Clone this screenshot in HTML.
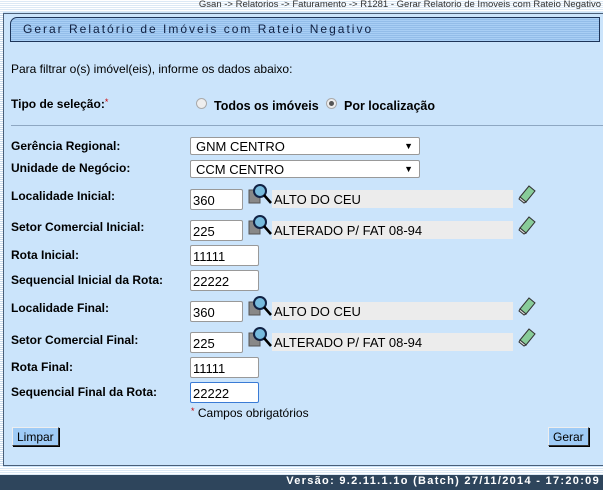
<!DOCTYPE html>
<html><head><meta charset="utf-8"><style>
*{box-sizing:border-box}
body{margin:0;width:603px;height:490px;overflow:hidden;background:#cbe4fb;font-family:"Liberation Sans",Arial,sans-serif;font-size:12px;color:#000;position:relative}
.a{position:absolute;white-space:nowrap}
.stripes{position:absolute;left:0;top:0;width:603px;height:12px;background:repeating-linear-gradient(#fff 0 1px,#dce9f5 1px 2px)}
.lstr{position:absolute;left:0;top:12px;width:3px;height:455px;background:repeating-linear-gradient(#fff 0 1px,#c9dcef 1px 2px)}
.panel{position:absolute;left:3px;top:13px;width:605px;height:453px;border:1px solid #4a5f78;border-right:none;background:#cbe4fb}
.title{position:absolute;left:10px;top:17px;width:590px;height:25px;border:1px solid #1e3559;border-radius:7px 0 0 0;background:repeating-linear-gradient(#a9cff5 0 1px,#93bde9 1px 2px);font-size:12px;letter-spacing:2px;color:#0f1f40;padding:4px 0 0 12px}
.lb{font-weight:bold;font-size:12px}
.in{position:absolute;height:21px;border:1px solid #999;background:#fff;font-size:13px;padding:3px 0 0 2px;border-radius:2px}
.sel{position:absolute;left:190px;width:230px;height:18px;border:1px solid #999;background:#fff;font-size:13px;padding:1px 0 0 5px;border-radius:2px}
.sel:after{content:"▼";position:absolute;right:6px;top:3px;font-size:9px}
.desc{position:absolute;left:272px;width:241px;height:18px;background:#ececec;font-size:13px;padding:2px 0 0 2px}
.btn{position:absolute;height:19px;background:#9fcbf6;border:1px solid #333;border-top-color:#eee;border-left-color:#eee;font-size:12px;padding:2px 4px;box-shadow:1px 1px 0 #000}
.foot{position:absolute;left:0;top:475px;width:603px;height:15px;background:#2e455c;color:#fff;font-weight:bold;font-size:11px;letter-spacing:1.3px;text-align:right;padding:0 3px 0 0}
</style></head><body>
<div class="stripes"></div>
<div class="a" style="right:2px;top:-1px;font-size:9.5px;color:#333">Gsan -&gt; Relatorios -&gt; Faturamento -&gt; R1281 - Gerar Relatorio de Imoveis com Rateio Negativo</div>
<div class="lstr"></div>
<div class="panel"></div>
<div class="title">Gerar Relatório de Imóveis com Rateio Negativo</div>
<div class="a" style="left:11px;top:62px">Para filtrar o(s) imóvel(eis), informe os dados abaixo:</div>
<div class="a lb" style="left:11px;top:97px">Tipo de seleção:<span style="color:#c00;font-weight:normal;font-size:9px;vertical-align:top">*</span></div>
<div class="a" style="left:196px;top:98px;width:11px;height:11px;border-radius:50%;border:1px solid #aaa;background:#eee"></div>
<div class="a lb" style="left:214px;top:99px;font-size:12.5px">Todos os imóveis</div>
<div class="a" style="left:326px;top:98px;width:11px;height:11px;border-radius:50%;border:1px solid #aaa;background:#eee"><div style="width:5px;height:5px;background:#555;border-radius:50%;margin:2px"></div></div>
<div class="a lb" style="left:344px;top:99px;font-size:12.5px">Por localização</div>
<div class="a" style="left:11px;top:125px;width:592px;height:1px;background:#8ea7c2"></div>

<div class="a lb" style="left:11px;top:139px">Gerência Regional:</div>
<div class="sel" style="top:137px">GNM CENTRO</div>
<div class="a lb" style="left:11px;top:161px">Unidade de Negócio:</div>
<div class="sel" style="top:160px">CCM CENTRO</div>

<div class="a lb" style="left:11px;top:189px">Localidade Inicial:</div>
<div class="in" style="left:190px;top:189px;width:53px">360</div>
<svg class="a" style="left:248px;top:184px" width="24" height="24"><rect x="1" y="6" width="11" height="13" fill="#888" stroke="#555"/><circle cx="12" cy="7" r="6" fill="#7bd" stroke="#124" stroke-width="2"/><line x1="16" y1="11" x2="23" y2="19" stroke="#000" stroke-width="2.5"/></svg>
<div class="desc" style="top:190px">ALTO DO CEU</div>
<svg class="a" style="left:517px;top:184px" width="20" height="20"><path d="M3 13 L12 2 L18 7 L9 18 Z" fill="#8c9" stroke="#333"/><path d="M3 13 L9 18 L7 19 L2 15Z" fill="#ddd" stroke="#333"/></svg>

<div class="a lb" style="left:11px;top:220px">Setor Comercial Inicial:</div>
<div class="in" style="left:190px;top:220px;width:53px">225</div>
<svg class="a" style="left:248px;top:215px" width="24" height="24"><rect x="1" y="6" width="11" height="13" fill="#888" stroke="#555"/><circle cx="12" cy="7" r="6" fill="#7bd" stroke="#124" stroke-width="2"/><line x1="16" y1="11" x2="23" y2="19" stroke="#000" stroke-width="2.5"/></svg>
<div class="desc" style="top:221px">ALTERADO P/ FAT 08-94</div>
<svg class="a" style="left:517px;top:215px" width="20" height="20"><path d="M3 13 L12 2 L18 7 L9 18 Z" fill="#8c9" stroke="#333"/><path d="M3 13 L9 18 L7 19 L2 15Z" fill="#ddd" stroke="#333"/></svg>

<div class="a lb" style="left:11px;top:248px">Rota Inicial:</div>
<div class="in" style="left:190px;top:245px;width:69px">11111</div>
<div class="a lb" style="left:11px;top:273px">Sequencial Inicial da Rota:</div>
<div class="in" style="left:190px;top:270px;width:69px">22222</div>

<div class="a lb" style="left:11px;top:301px">Localidade Final:</div>
<div class="in" style="left:190px;top:301px;width:53px">360</div>
<svg class="a" style="left:248px;top:296px" width="24" height="24"><rect x="1" y="6" width="11" height="13" fill="#888" stroke="#555"/><circle cx="12" cy="7" r="6" fill="#7bd" stroke="#124" stroke-width="2"/><line x1="16" y1="11" x2="23" y2="19" stroke="#000" stroke-width="2.5"/></svg>
<div class="desc" style="top:302px">ALTO DO CEU</div>
<svg class="a" style="left:517px;top:296px" width="20" height="20"><path d="M3 13 L12 2 L18 7 L9 18 Z" fill="#8c9" stroke="#333"/><path d="M3 13 L9 18 L7 19 L2 15Z" fill="#ddd" stroke="#333"/></svg>

<div class="a lb" style="left:11px;top:333px">Setor Comercial Final:</div>
<div class="in" style="left:190px;top:332px;width:53px">225</div>
<svg class="a" style="left:248px;top:327px" width="24" height="24"><rect x="1" y="6" width="11" height="13" fill="#888" stroke="#555"/><circle cx="12" cy="7" r="6" fill="#7bd" stroke="#124" stroke-width="2"/><line x1="16" y1="11" x2="23" y2="19" stroke="#000" stroke-width="2.5"/></svg>
<div class="desc" style="top:333px">ALTERADO P/ FAT 08-94</div>
<svg class="a" style="left:517px;top:327px" width="20" height="20"><path d="M3 13 L12 2 L18 7 L9 18 Z" fill="#8c9" stroke="#333"/><path d="M3 13 L9 18 L7 19 L2 15Z" fill="#ddd" stroke="#333"/></svg>

<div class="a lb" style="left:11px;top:360px">Rota Final:</div>
<div class="in" style="left:190px;top:357px;width:69px">11111</div>
<div class="a lb" style="left:11px;top:385px">Sequencial Final da Rota:</div>
<div class="in" style="left:190px;top:382px;width:69px;border-color:#3a7bd5">22222</div>
<div class="a" style="left:191px;top:406px"><span style="color:#c00;font-size:9px;vertical-align:top">*</span> Campos obrigatórios</div>

<div class="btn" style="left:12px;top:427px">Limpar</div>
<div class="btn" style="left:548px;top:427px">Gerar</div>
<div class="a" style="left:0;top:467px;width:603px;height:8px;background:repeating-linear-gradient(#fff 0 1px,#dce9f5 1px 2px)"></div>
<div class="foot">Versão: 9.2.11.1.1o (Batch) 27/11/2014 - 17:20:09</div>
</body></html>
